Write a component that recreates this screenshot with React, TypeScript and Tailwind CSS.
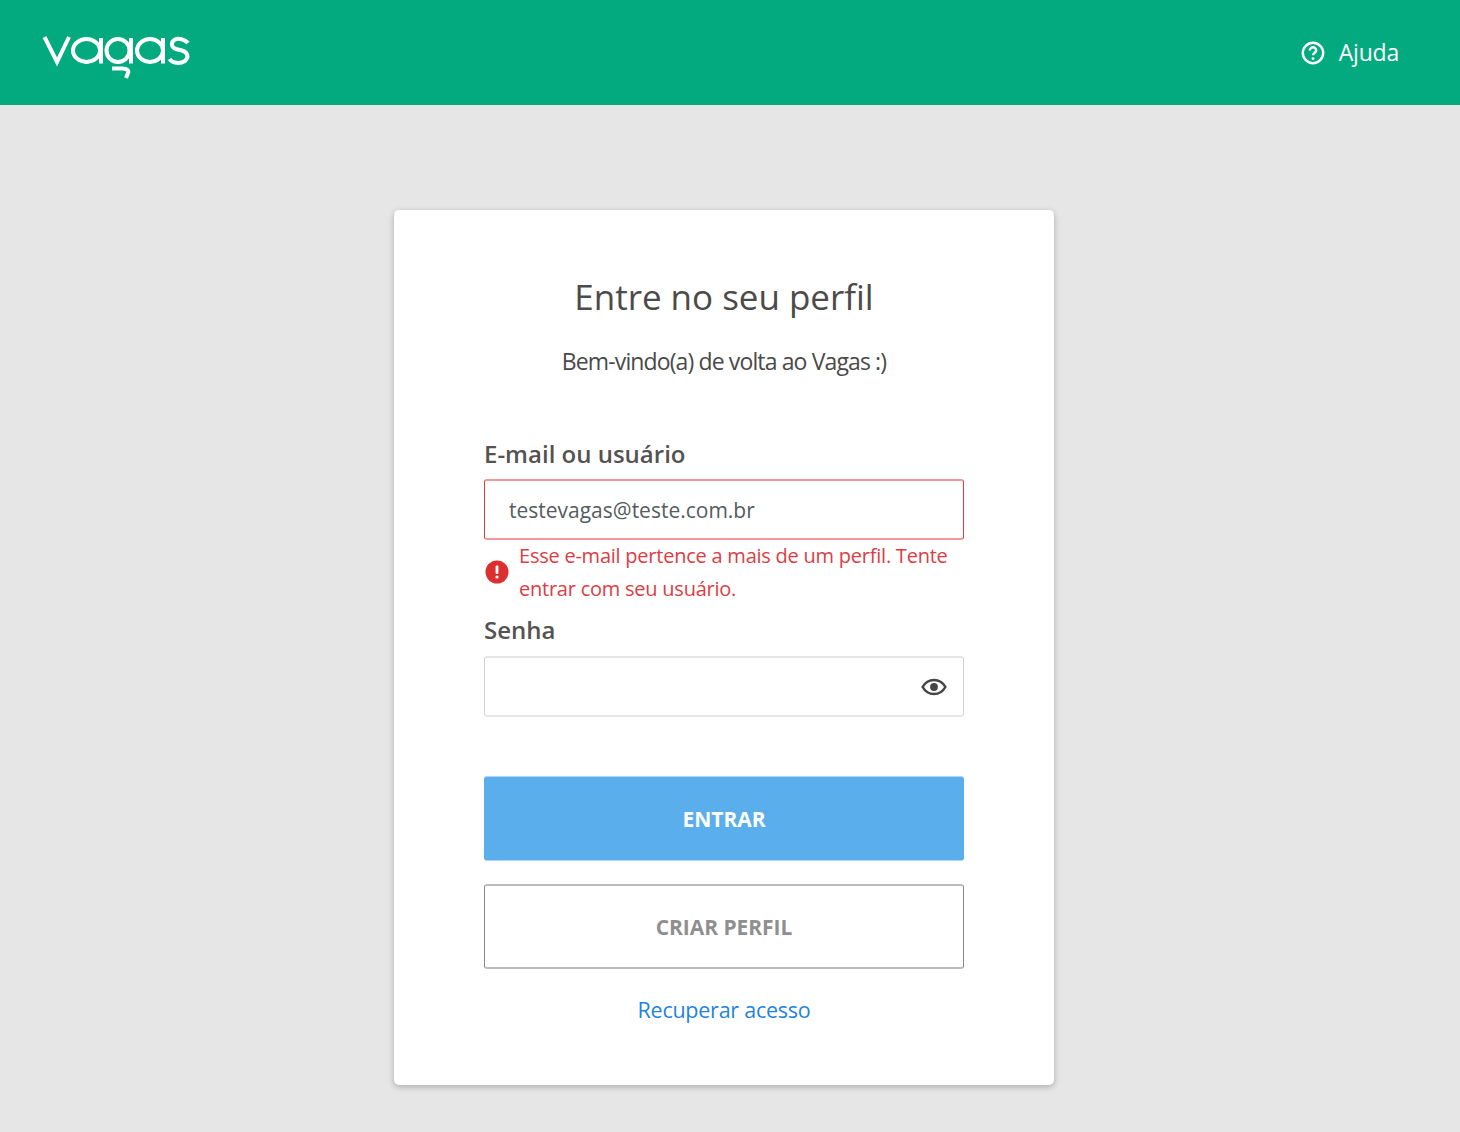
import React from 'react';

// viewBox uses page coordinates so the strokes line up with the reference
const VagasLogo = () => (
  <svg width="150" height="52" viewBox="41 26.5 150 52" fill="none" stroke="#fff" strokeWidth="4" aria-label="vagas">
    <path d="M44.5 36.5 L57 61.5 L69 36.5" />
    <ellipse cx="86.5" cy="50" rx="13.5" ry="11.4" />
    <path d="M101 37.5 V63" />
    <ellipse cx="118" cy="50" rx="11.5" ry="11.4" />
    <path d="M131 37.5 V63" />
    <path d="M112 68 H122.5 C127.5 68 129 70.5 128 72.5 L126 77.5" />
    <ellipse cx="150" cy="50" rx="13" ry="11.4" />
    <path d="M163 37.5 V63" />
    <path d="M188 42.5 C185 38.5 178 37.5 175 39 C170.5 41.5 171 47 176 48.5 L182 50 C188 51.8 189 57 185 60.5 C180 63.5 172.5 63 169.5 58.5" />
  </svg>
);

export default function App() {
  return (
    <div className="min-h-[1132px] bg-[#e6e6e6] font-['Open_Sans',sans-serif] text-[#4a4a4a]">
      {/* Header */}
      <header className="flex h-[105px] items-center justify-between bg-[#03aa7f] pl-[41px] pr-[61px]">
        <VagasLogo />
        <a className="flex items-center gap-[14px] text-[23px] tracking-[-0.2px] text-white">
          <svg width="24" height="24" viewBox="0 0 24 24" fill="none" stroke="#fff" strokeWidth="2.4">
            <circle cx="12" cy="12" r="10.2" />
            <path d="M8.8 9.5a3.2 3.2 0 0 1 6.4 0c0 2.2-3.2 2.4-3.2 4.7" strokeWidth="2.4" />
            <circle cx="12" cy="17.6" r="1.4" fill="#fff" stroke="none" />
          </svg>
          Ajuda
        </a>
      </header>

      <main className="flex justify-center pr-3 pt-[105px]">
        <div className="flex w-[660px] flex-col rounded-[5px] bg-white px-[90px] pb-[59px] pt-[64px] shadow-[0_2px_6px_rgba(0,0,0,0.25)]">
          <h1 className="text-center text-[35px] leading-[46px] tracking-[-0.02px] text-[#4d4a4a]">Entre no seu perfil</h1>
          <p className="mt-[25px] text-center text-[23px] leading-[32px] tracking-[-0.875px]">Bem-vindo(a) de volta ao Vagas :)</p>

          <label className="mt-[61px] text-[24px] font-semibold leading-[32px] text-[#555252]">E-mail ou usuário</label>
          <div className="mt-[9px] flex h-[61px] items-center rounded-[3px] border-x border-y-2 border-x-[#e03c3c] border-y-[#ee9a9a] pl-[24px] pt-[3px] text-[21px] text-[#555b60]">
            testevagas@teste.com.br
          </div>
          <div className="-mt-[1px] flex items-center gap-[10px] text-[20px] leading-[33px] tracking-[-0.235px] text-[#dc3d44]">
            <svg width="24" height="24" viewBox="0 0 24 24" className="ml-[1px] shrink-0">
              <circle cx="12" cy="12" r="11.5" fill="#dc3030" />
              <rect x="10.6" y="5.5" width="2.8" height="8.5" rx="1" fill="#fff" />
              <circle cx="12" cy="17" r="1.6" fill="#fff" />
            </svg>
            <span>Esse e-mail pertence a mais de um perfil. Tente entrar com seu usuário.</span>
          </div>

          <label className="mt-[9px] text-[24px] font-semibold leading-[32px] text-[#555252]">Senha</label>
          <div className="mt-[10px] flex h-[61px] items-center justify-end rounded-[3px] border-x border-y-2 border-x-[#d2d2d2] border-y-[#e6e6e6] pr-[16px]">
            <svg width="26" height="26" viewBox="0 0 24 24" fill="none" stroke="#454545" strokeWidth="2.3">
              <path d="M1.5 12C4 7.5 7.5 5.5 12 5.5S20 7.5 22.5 12C20 16.5 16.5 18.5 12 18.5S4 16.5 1.5 12Z" />
              <circle cx="12" cy="12" r="3.6" fill="#454545" stroke="none" />
            </svg>
          </div>

          <button className="mt-[59px] h-[85px] rounded-[3px] border-y border-y-[#acd6f5] bg-[#5aaeec] pt-[3px] text-[21px] font-bold text-white">ENTRAR</button>
          <button className="mt-[23px] h-[85px] rounded-[3px] border-x border-y-2 border-x-[#888888] border-y-[#bcbcbc] bg-white pt-[3px] text-[21px] font-bold tracking-[-0.05px] text-[#8f8f8f]">CRIAR PERFIL</button>
          <a className="mt-[25px] text-center text-[21.5px] leading-[32px] tracking-[-0.25px] text-[#1f83e0]">Recuperar acesso</a>
        </div>
      </main>
    </div>
  );
}
